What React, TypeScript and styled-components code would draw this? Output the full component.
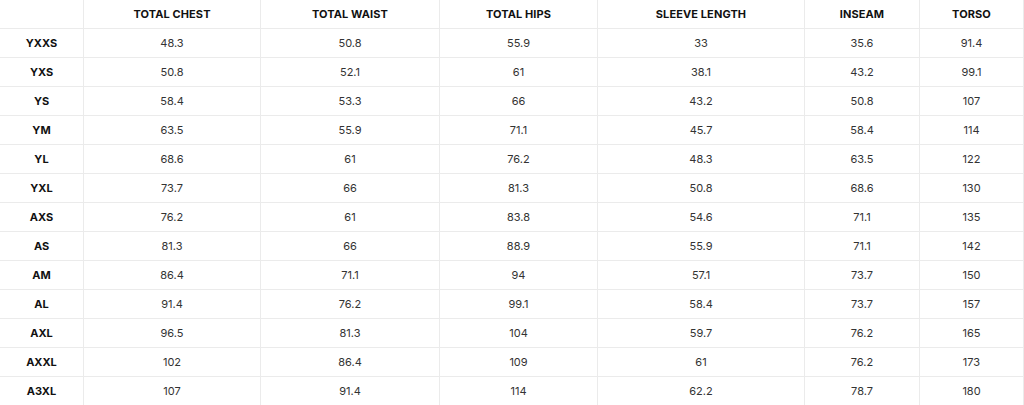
import React from "react";
import styled, { createGlobalStyle } from "styled-components";

const Global = createGlobalStyle`
  html, body { margin: 0; padding: 0; background: #fff; }
  body { font-family: Inter, "Noto Sans", sans-serif; }
`;

const Grid = styled.div`
  display: grid;
  grid-template-columns: 83px 176px 178px 157px 206px 114px 103px;
  grid-auto-rows: 28px;
  gap: 1px;
  background: #ebebeb;
  padding-right: 1px;
  width: 1024px;
  box-sizing: border-box;
`;

const Cell = styled.div`
  background: #fff;
  display: flex;
  align-items: center;
  justify-content: center;
  font-size: 11px;
  white-space: nowrap;
`;

const HeadCell = styled(Cell)`
  font-weight: 700;
  color: #111;
  letter-spacing: 0.1px;
`;

const SizeCell = styled(Cell)`
  font-weight: 700;
  color: #111;
`;

const ValueCell = styled(Cell)`
  font-weight: 400;
  color: #333;
`;

const headers = ["", "TOTAL CHEST", "TOTAL WAIST", "TOTAL HIPS", "SLEEVE LENGTH", "INSEAM", "TORSO"];

const rows: [string, ...string[]][] = [
  ["YXXS", "48.3", "50.8", "55.9", "33", "35.6", "91.4"],
  ["YXS", "50.8", "52.1", "61", "38.1", "43.2", "99.1"],
  ["YS", "58.4", "53.3", "66", "43.2", "50.8", "107"],
  ["YM", "63.5", "55.9", "71.1", "45.7", "58.4", "114"],
  ["YL", "68.6", "61", "76.2", "48.3", "63.5", "122"],
  ["YXL", "73.7", "66", "81.3", "50.8", "68.6", "130"],
  ["AXS", "76.2", "61", "83.8", "54.6", "71.1", "135"],
  ["AS", "81.3", "66", "88.9", "55.9", "71.1", "142"],
  ["AM", "86.4", "71.1", "94", "57.1", "73.7", "150"],
  ["AL", "91.4", "76.2", "99.1", "58.4", "73.7", "157"],
  ["AXL", "96.5", "81.3", "104", "59.7", "76.2", "165"],
  ["AXXL", "102", "86.4", "109", "61", "76.2", "173"],
  ["A3XL", "107", "91.4", "114", "62.2", "78.7", "180"],
];

export default function App() {
  return (
    <>
      <Global />
      <Grid role="table">
        {headers.map((h, i) => (
          <HeadCell key={"h" + i} role="columnheader">{h}</HeadCell>
        ))}
        {rows.map(([size, ...vals]) => (
          <React.Fragment key={size}>
            <SizeCell role="rowheader">{size}</SizeCell>
            {vals.map((v, j) => (
              <ValueCell key={size + j} role="cell">{v}</ValueCell>
            ))}
          </React.Fragment>
        ))}
      </Grid>
    </>
  );
}
